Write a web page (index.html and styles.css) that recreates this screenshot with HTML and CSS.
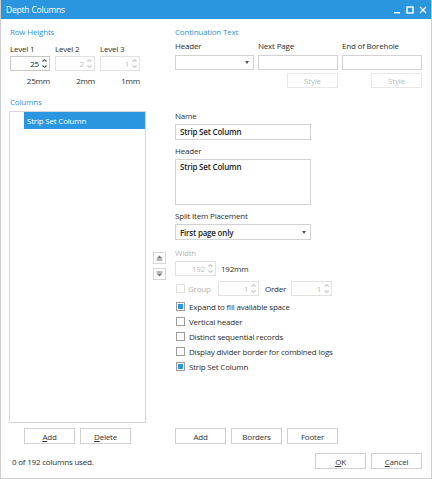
FILE: index.html
```html
<!DOCTYPE html>
<html lang="en">
<head>
    <meta charset="UTF-8">
    <title>Depth Columns</title>
    <link rel="stylesheet" href="styles.css">
</head>
<body>
    <div class="window">
        <div class="titlebar">
            <span class="title">Depth Columns</span>
            <div class="controls">
                <svg width="8" height="8" viewBox="0 0 8 8"><rect x="1" y="6" width="6" height="1.4" fill="#fff"/></svg>
                <svg width="8" height="8" viewBox="0 0 8 8"><rect x="1" y="1" width="6" height="6" fill="none" stroke="#fff" stroke-width="1.4"/></svg>
                <svg width="8" height="8" viewBox="0 0 8 8"><path d="M1 1 L7 7 M7 1 L1 7" stroke="#fff" stroke-width="1.3"/></svg>
            </div>
        </div>

        <div class="content">
            <div class="top">
                <div class="row-heights">
                    <div class="group-title">Row Heights</div>
                    <div class="levels">
                        <div class="level">
                            <div class="label">Level 1</div>
                            <div class="spin"><span>25</span><i class="arrows"></i></div>
                            <div class="mm">25mm</div>
                        </div>
                        <div class="level">
                            <div class="label">Level 2</div>
                            <div class="spin disabled"><span>2</span><i class="arrows"></i></div>
                            <div class="mm">2mm</div>
                        </div>
                        <div class="level">
                            <div class="label">Level 3</div>
                            <div class="spin disabled"><span>1</span><i class="arrows"></i></div>
                            <div class="mm">1mm</div>
                        </div>
                    </div>
                </div>

                <div class="continuation">
                    <div class="group-title">Continuation Text</div>
                    <div class="cont-cols">
                        <div class="cont-col">
                            <div class="label">Header</div>
                            <div class="combo"><span></span><i class="caret"></i></div>
                        </div>
                        <div class="cont-col">
                            <div class="label">Next Page</div>
                            <div class="textbox"></div>
                            <button class="btn disabled">Style</button>
                        </div>
                        <div class="cont-col">
                            <div class="label">End of Borehole</div>
                            <div class="textbox"></div>
                            <button class="btn disabled">Style</button>
                        </div>
                    </div>
                </div>
            </div>

            <div class="main">
                <div class="columns-pane">
                    <div class="group-title">Columns</div>
                    <div class="list">
                        <div class="item selected">Strip Set Column</div>
                    </div>
                    <div class="btn-row centered">
                        <button class="btn"><u>A</u>dd</button>
                        <button class="btn"><u>D</u>elete</button>
                    </div>
                </div>

                <div class="move">
                    <button class="move-btn">
                        <svg width="7" height="6" viewBox="0 0 7 6"><path d="M3.5 0.5 L6.5 3.5 L0.5 3.5 Z" fill="#777"/><rect x="0.5" y="4.5" width="6" height="1" fill="#777"/></svg>
                    </button>
                    <button class="move-btn">
                        <svg width="7" height="6" viewBox="0 0 7 6"><rect x="0.5" y="0.5" width="6" height="1" fill="#777"/><path d="M0.5 2.5 L6.5 2.5 L3.5 5.5 Z" fill="#777"/></svg>
                    </button>
                </div>

                <div class="details">
                    <div class="label">Name</div>
                    <div class="textbox wide bold">Strip Set Column</div>

                    <div class="label gap">Header</div>
                    <div class="textarea bold">Strip Set Column</div>

                    <div class="label gap">Split Item Placement</div>
                    <div class="combo wide bold"><span>First page only</span><i class="caret"></i></div>

                    <div class="label gap-lg disabled-text">Width</div>
                    <div class="width-row">
                        <div class="spin disabled"><span>192</span><i class="arrows"></i></div>
                        <span class="unit">192mm</span>
                    </div>

                    <div class="group-row">
                        <span class="check disabled"></span>
                        <span class="disabled-text group-label">Group</span>
                        <div class="spin disabled"><span>1</span><i class="arrows"></i></div>
                        <span class="order-label">Order</span>
                        <div class="spin disabled"><span>1</span><i class="arrows"></i></div>
                    </div>

                    <div class="checks">
                        <div class="check-row"><span class="check on"></span>Expand to fill available space</div>
                        <div class="check-row"><span class="check"></span>Vertical header</div>
                        <div class="check-row"><span class="check"></span>Distinct sequential records</div>
                        <div class="check-row"><span class="check"></span>Display divider border for combined logs</div>
                        <div class="check-row"><span class="check on"></span>Strip Set Column</div>
                    </div>

                    <div class="btn-row bottom">
                        <button class="btn">Add</button>
                        <button class="btn">Borders</button>
                        <button class="btn">Footer</button>
                    </div>
                </div>
            </div>

            <div class="footer">
                <span class="status">0 of 192 columns used.</span>
                <div class="btn-row">
                    <button class="btn"><u>O</u>K</button>
                    <button class="btn"><u>C</u>ancel</button>
                </div>
            </div>
        </div>
    </div>
</body>
</html>
```

FILE: styles.css
```css
* {
    box-sizing: border-box;
}

body {
    margin: 0;
    font-family: "Open Sans", "Noto Sans", sans-serif;
    font-size: 8px;
    letter-spacing: -0.2px;
    color: #2e2e2e;
    background: #fff;
}

.window {
    width: 432px;
    height: 479px;
    border: 1px solid #cdcdcd;
    border-top: none;
    display: flex;
    flex-direction: column;
}

.titlebar {
    height: 21px;
    background-color: #2b96e0;
    color: white;
    display: flex;
    align-items: center;
    justify-content: space-between;
    padding: 0 4px 0 5px;
    font-size: 8.5px;
}

.controls {
    display: flex;
    gap: 5px;
}

.content {
    flex: 1;
    display: flex;
    flex-direction: column;
    padding: 0 8px 0 8px;
}

.label {
    line-height: 12px;
    height: 12px;
    white-space: nowrap;
}

.group-title {
    color: #2b96e0;
    line-height: 12px;
    height: 12px;
}

/* top section */
.top {
    display: flex;
    margin-top: 7px;
}

.row-heights {
    width: 166px;
    padding-left: 1px;
}

.levels {
    display: flex;
    gap: 5px;
    margin-top: 5px;
}

.level {
    width: 40px;
}

.level .spin {
    margin-top: 1px;
}

.mm {
    text-align: right;
    line-height: 12px;
    margin-top: 4px;
}

.cont-cols {
    display: flex;
    gap: 4px;
    margin-top: 2px;
}

.cont-col {
    width: 80px;
    display: flex;
    flex-direction: column;
    align-items: flex-end;
}

.cont-col:first-child {
    width: 79px;
}

.cont-col .label {
    align-self: flex-start;
}

.cont-col .combo,
.cont-col .textbox {
    width: 100%;
    height: 15px;
    margin-top: 3px;
}

.cont-col .btn {
    margin-top: 3px;
    height: 15px;
}

/* inputs */
.spin {
    height: 15px;
    border: 1px solid #c6c6c6;
    display: flex;
    align-items: center;
    justify-content: flex-end;
    padding-right: 2px;
    color: #222;
}

.spin span {
    padding-right: 3px;
}

.arrows {
    width: 5px;
    height: 9px;
    position: relative;
    color: #555;
}

.arrows::before,
.arrows::after {
    content: "";
    position: absolute;
    left: 0;
    width: 5px;
    height: 3px;
    background: currentColor;
}

.arrows::before {
    top: 0;
    clip-path: polygon(50% 0, 100% 70%, 80% 100%, 50% 45%, 20% 100%, 0 70%);
}

.arrows::after {
    bottom: 0;
    clip-path: polygon(0 30%, 20% 0, 50% 55%, 80% 0, 100% 30%, 50% 100%);
}

.spin.disabled {
    border-color: #e2e2e2;
    color: #bcbcbc;
}

.spin.disabled .arrows {
    color: #c4c4c4;
}

.textbox {
    border: 1px solid #d2d2d2;
    height: 16px;
    line-height: 14px;
    padding-left: 4px;
}

.combo {
    border: 1px solid #d2d2d2;
    height: 16px;
    display: flex;
    align-items: center;
    justify-content: space-between;
    padding: 0 4px;
}

.caret {
    width: 0;
    height: 0;
    border-left: 2.5px solid transparent;
    border-right: 2.5px solid transparent;
    border-top: 3px solid #555;
}

.wide {
    width: 136px;
    margin-top: 2px;
}

.bold {
    font-weight: 600;
    color: #222;
}

.textarea {
    width: 136px;
    height: 46px;
    border: 1px solid #d2d2d2;
    margin-top: 2px;
    padding: 1px 4px;
    line-height: 12px;
}

.btn {
    width: 51px;
    height: 16px;
    padding: 0;
    border: 1px solid #cfcfcf;
    background: #fff;
    font-family: inherit;
    font-size: 8px;
    letter-spacing: -0.2px;
    color: #333;
}

.btn.disabled {
    border-color: #e8e8e8;
    color: #bdbdbd;
}

.btn-row {
    display: flex;
    gap: 5px;
}

/* main area */
.main {
    display: flex;
    flex: 1;
    margin-top: 8px;
}

.columns-pane {
    width: 137px;
    display: flex;
    flex-direction: column;
}

.columns-pane .group-title {
    padding-left: 1px;
}

.list {
    margin-top: 3px;
    height: 312px;
    border: 1px solid #d6d6d6;
    padding-left: 14px;
}

.item {
    height: 17px;
    line-height: 17px;
    padding-left: 3px;
    color: #fff;
}

.item.selected {
    background-color: #2b96e0;
}

.btn-row.centered {
    justify-content: center;
    margin-top: 5px;
}

.move {
    display: flex;
    flex-direction: column;
    gap: 4px;
    margin-left: 7px;
    padding-top: 156px;
}

.move-btn {
    width: 13px;
    height: 12px;
    padding: 0;
    border: 1px solid #d6d6d6;
    background: #fff;
    display: flex;
    align-items: center;
    justify-content: center;
}

.details {
    margin-left: 9px;
    padding-top: 14px;
    display: flex;
    flex-direction: column;
    flex: 1;
}

.gap {
    margin-top: 5px;
}

.gap-lg {
    margin-top: 7px;
}

.disabled-text {
    color: #b5b5b5;
}

.width-row {
    display: flex;
    align-items: center;
    margin-top: 2px;
}

.width-row .spin,
.group-row .spin {
    width: 41px;
    flex: none;
}

.unit {
    margin-left: 5px;
}

.group-row {
    display: flex;
    align-items: center;
    margin-top: 5px;
    height: 15px;
}

.group-label {
    margin-left: 3px;
    width: 30px;
    flex: none;
}

.order-label {
    margin: 0 5px 0 6px;
}

.checks {
    margin-top: 3px;
}

.check-row {
    display: flex;
    align-items: center;
    height: 15px;
    white-space: nowrap;
}

.check {
    width: 9px;
    height: 9px;
    border: 1px solid #9d9d9d;
    margin-left: 1px;
    margin-right: 4px;
    padding: 1px;
    background-clip: content-box;
    flex: none;
}

.check.on {
    background-color: #2b96e0;
}

.check.disabled {
    border-color: #dedede;
    margin-right: 0;
}

.btn-row.bottom {
    margin-top: auto;
}

/* footer */
.footer {
    display: flex;
    justify-content: space-between;
    align-items: center;
    margin-top: 9px;
    margin-bottom: 9px;
    padding-left: 3px;
}

.footer .btn-row {
    padding-right: 1px;
}
```
